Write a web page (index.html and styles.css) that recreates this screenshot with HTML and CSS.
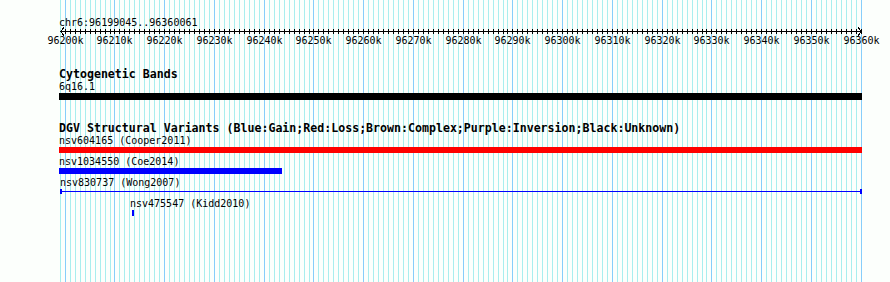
FILE: index.html
```html
<!DOCTYPE html>
<html lang="en">
<head>
	<meta charset="UTF-8">
	<title>chr6:96199045..96360061</title>
	<link rel="stylesheet" href="styles.css">
</head>
<body>
	<div class="panel">
		<svg class="grid" id="grid" width="890" height="282"></svg>

		<div class="tracks">
			<!-- ruler -->
			<div class="ruler">
				<div class="ref-name">chr6:96199045..96360061</div>
				<svg class="scale" id="scale" width="890" height="20"></svg>
			</div>

			<!-- cytoband -->
			<div class="track track-band">
				<h2 class="track-title">Cytogenetic Bands</h2>
				<div class="feature feature-band" style="margin-left:59px">
					<div class="feature-name">6q16.1</div>
					<div class="bar bar-black" style="width:803px"></div>
				</div>
			</div>

			<!-- dgv -->
			<div class="track track-dgv">
				<h2 class="track-title">DGV Structural Variants (Blue:Gain;Red:Loss;Brown:Complex;Purple:Inversion;Black:Unknown)</h2>
				<div class="feature" style="margin-left:59px">
					<div class="feature-name">nsv604165 (Cooper2011)</div>
					<div class="bar bar-red" style="width:803px"></div>
				</div>
				<div class="feature" style="margin-left:59px">
					<div class="feature-name">nsv1034550 (Coe2014)</div>
					<div class="bar bar-blue" style="width:223px"></div>
				</div>
				<div class="feature" style="margin-left:60px">
					<div class="feature-name">nsv830737 (Wong2007)</div>
					<div class="span-line" style="width:802px"></div>
				</div>
				<div class="feature" style="margin-left:130px">
					<div class="feature-name">nsv475547 (Kidd2010)</div>
					<div class="bar bar-blue bar-tiny" style="width:2px"></div>
				</div>
			</div>
		</div>
	</div>

	<script type="text/javascript">
		window.onload = function(){
			var start = 96199045;
			var end = 96360061;
			var x0 = 60;
			var x1 = 861;
			var scale = (x1 - x0) / (end - start);
			var ns = 'http://www.w3.org/2000/svg';
			var grid = document.getElementById('grid');
			var ruler = document.getElementById('scale');

			// 坐标换算
			function px(pos){
				return Math.round(x0 + (pos - start) * scale);
			}

			function el(name, attrs, parent){
				var node = document.createElementNS(ns, name);
				for(var k in attrs){
					node.setAttribute(k, attrs[k]);
				}
				parent.appendChild(node);
				return node;
			}

			// 网格线，先画细线再画粗线
			var majors = [];
			for(var k = 96199; k <= 96360; k++){
				var x = px(k * 1000);
				if(k % 10 == 0){
					majors.push({x: x, k: k});
					continue;
				}
				el('line', {x1: x + .5, y1: 0, x2: x + .5, y2: 282, 'class': 'minor'}, grid);
			}
			for(var i = 0; i < majors.length; i++){
				el('line', {x1: majors[i].x + .5, y1: 0, x2: majors[i].x + .5, y2: 282, 'class': 'major'}, grid);
			}

			// 标尺
			el('line', {x1: x0, y1: 2.5, x2: x1 + 1, y2: 2.5, 'class': 'axis'}, ruler);
			el('polyline', {points: (x0 + 4) + ',-1.5 ' + (x0 + .5) + ',2.5 ' + (x0 + 4) + ',6.5', 'class': 'axis'}, ruler);
			el('polyline', {points: (x1 - 3) + ',-1.5 ' + (x1 + .5) + ',2.5 ' + (x1 - 3) + ',6.5', 'class': 'axis'}, ruler);
			for(var k = 96200; k <= 96360; k++){
				var x = px(k * 1000);
				el('line', {x1: x + .5, y1: 0, x2: x + .5, y2: 5, 'class': 'axis'}, ruler);
			}
			for(var i = 0; i < majors.length; i++){
				var t = el('text', {x: majors[i].x + .5, y: 15, 'class': 'tick-label'}, ruler);
				t.textContent = majors[i].k + 'k';
			}
		}
	</script>
</body>
</html>
```

FILE: styles.css
```css
*{
	margin: 0;
	padding: 0;
}
body{
	background-color: #fcfffc;
}
/*panel*/
.panel{
	position: relative;
	width: 890px;
	height: 282px;
	overflow: hidden;
	background-color: #fcfffc;
	font-family: "DejaVu Sans Mono", "Liberation Mono", monospace;
	color: #000;
}
.grid{
	position: absolute;
	top: 0;
	left: 0;
}
.grid line{
	stroke-width: 1;
	shape-rendering: crispEdges;
}
.grid .minor{
	stroke: #a8eeee;
}
.grid .major{
	stroke: #87cefa;
}
.tracks{
	position: relative;
}
/*ruler*/
.ruler{
	padding-top: 16px;
}
.ref-name,
.feature-name{
	font-size: 10px;
	line-height: 12px;
	height: 12px;
	white-space: nowrap;
}
.ref-name{
	margin-left: 59px;
	line-height: 13px;
	height: 13px;
}
.scale{
	display: block;
	overflow: visible;
}
.scale .axis{
	fill: none;
	stroke: #000;
	stroke-width: 1;
	shape-rendering: crispEdges;
}
.tick-label{
	font-family: "DejaVu Sans Mono", "Liberation Mono", monospace;
	font-size: 10px;
	text-anchor: middle;
	fill: #000;
}
/*tracks*/
.track-title{
	font-size: 11.6px;
	font-weight: bold;
	line-height: 13px;
	height: 13px;
	margin-left: 59px;
	white-space: nowrap;
}
.track-band{
	margin-top: 19px;
}
.track-dgv{
	margin-top: 22px;
}
.feature{
	height: 21px;
}
.feature-band{
	height: auto;
}
.bar{
	height: 6px;
}
.bar-black{
	height: 7px;
	background-color: #000;
}
.bar-red{
	background-color: #f00;
}
.bar-blue{
	background-color: #00f;
}
.bar-tiny{
	margin-left: 2px;
}
.span-line{
	height: 5px;
	border-left: 2px solid #00f;
	border-right: 2px solid #00f;
	background: linear-gradient(#00f, #00f) center / 100% 1px no-repeat;
	box-sizing: border-box;
}
```
